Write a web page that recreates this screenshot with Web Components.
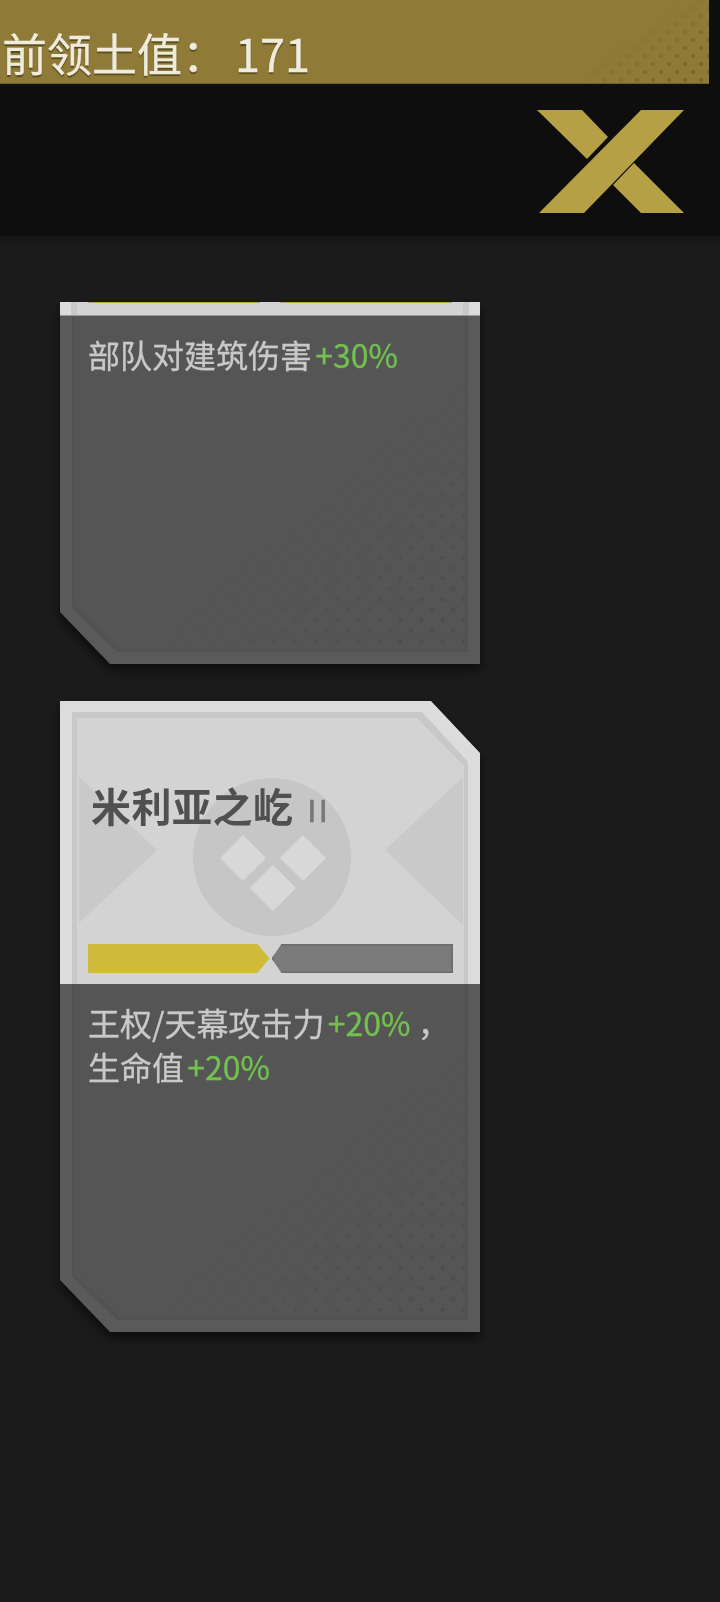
<!DOCTYPE html>
<html lang="zh">
<head>
<meta charset="utf-8">
<title>领土</title>
<style>
    html, body { margin: 0; background: #1c1c1c; }
    body { width: 720px; height: 1602px; overflow: hidden; font-family: "Noto Sans CJK SC", sans-serif; }
</style>
</head>
<body>
<territory-header value="171"></territory-header>
<perk-list>
    <perk-card collapsed>部队对建筑伤害<perk-gain>+30%</perk-gain></perk-card>
    <perk-card name="米利亚之屹" rank="II" filled="1">王权/天幕攻击力<perk-gain>+20%</perk-gain>，<br>生命值<perk-gain>+20%</perk-gain></perk-card>
</perk-list>

<script>
const dots = (size, alpha) => `
    background-image:
        radial-gradient(circle, rgba(0,0,0,${alpha}) 1.6px, transparent 2.6px),
        radial-gradient(circle, rgba(0,0,0,${alpha}) 1.6px, transparent 2.6px);
    background-size: ${size}px ${size}px;
    background-position: 0 0, ${size / 2}px ${size / 2}px;
`;

class CloseMark extends HTMLElement {
    constructor() {
        super();
        this.attachShadow({ mode: 'open' });
        this.shadowRoot.innerHTML = `
            <style>
                :host { display: block; width: 147px; height: 103px; }
                svg { display: block; }
            </style>
            <svg width="147" height="103" viewBox="0 0 147 103" fill="#b5a045">
                <polygon points="147,0 104,0 2,103 47,103"/>
                <polygon points="0,0 45,0 71,27 50,49"/>
                <polygon points="97,53 147,103 104,103 76,75"/>
            </svg>
        `;
    }
}

class TerritoryHeader extends HTMLElement {
    constructor() {
        super();
        this.attachShadow({ mode: 'open' });
    }

    connectedCallback() {
        const value = this.getAttribute('value') || '0';
        this.shadowRoot.innerHTML = `
            <style>
                :host {
                    display: block;
                    height: 236px;
                    background: #0e0e0e;
                    box-shadow: 0 4px 8px rgba(14,14,14,.6);
                }
                .bar {
                    position: relative;
                    width: 709px;
                    height: 84px;
                    box-sizing: border-box;
                    padding: 24px 0 0 2px;
                    background: #8f7b37;
                    border-bottom: 1px solid #6f5f28;
                    overflow: hidden;
                    color: #efebdd;
                    font: 400 45px/58px "Noto Sans CJK TC", "Noto Sans CJK SC", sans-serif;
                    -webkit-text-stroke: .3px #efebdd;
                    text-shadow: 0 2px 1px rgba(50,40,10,.6);
                    white-space: nowrap;
                    filter: blur(.5px);
                }
                .bar::after {
                    content: '';
                    position: absolute;
                    inset: 0 0 0 auto;
                    width: 120px;
                    ${dots(16, .16)}
                    -webkit-mask-image: linear-gradient(to bottom right, transparent 35%, #000 85%);
                    mask-image: linear-gradient(to bottom right, transparent 35%, #000 85%);
                }
                .num { margin-left: 8px; }
                .row { display: flex; justify-content: flex-end; padding: 26px 36px 0 0; }
                close-mark { filter: blur(.5px); }
            </style>
            <div class="bar">前领土值：<span class="num">${value}</span></div>
            <div class="row"><close-mark></close-mark></div>
        `;
    }
}

class PerkList extends HTMLElement {
    constructor() {
        super();
        this.attachShadow({ mode: 'open' });
        this.shadowRoot.innerHTML = `
            <style>
                :host { display: flex; flex-direction: column; gap: 37px; padding: 66px 0 0 60px; }
            </style>
            <slot></slot>
        `;
    }
}

class PerkGain extends HTMLElement {
    constructor() {
        super();
        this.attachShadow({ mode: 'open' });
        this.shadowRoot.innerHTML = `
            <style>
                :host { display: inline; margin-left: -4px; color: #72c14f; -webkit-text-stroke-color: #72c14f; }
            </style>
            <slot></slot>
        `;
    }
}

class LevelBar extends HTMLElement {
    constructor() {
        super();
        this.attachShadow({ mode: 'open' });
    }

    connectedCallback() {
        const total = Number(this.getAttribute('total') || 2);
        const filled = Number(this.getAttribute('filled') || 0);
        let segs = '';
        for (let i = 0; i < total; i++) {
            const cls = [i < filled ? 'on' : 'off', i === 0 ? 'first' : 'last'].join(' ');
            segs += `<div class="seg ${cls}"></div>`;
        }
        this.shadowRoot.innerHTML = `
            <style>
                :host { display: flex; gap: 2px; height: 29px; }
                .seg { flex: 1; }
                .on { background: #d0bb3b; }
                .off { background: #7b7b7b; box-shadow: inset 0 0 0 1.5px #6c6c6c; }
                .first { clip-path: polygon(0 0, calc(100% - 12px) 0, 100% 50%, calc(100% - 12px) 100%, 0 100%); }
                .last { clip-path: polygon(10px 0, 100% 0, 100% 100%, 10px 100%, 0 50%); }
            </style>
            ${segs}
        `;
    }
}

class PerkCard extends HTMLElement {
    constructor() {
        super();
        this.attachShadow({ mode: 'open' });
    }

    connectedCallback() {
        const name = this.getAttribute('name');
        const rank = this.getAttribute('rank') || '';
        const filled = this.getAttribute('filled') || '0';
        const head = this.hasAttribute('collapsed')
            ? `<div class="strip"><div class="sliver"></div><div class="sliver"></div></div>`
            : `<div class="head">
                    <div class="face"></div>
                    <svg class="art" width="420" height="283" viewBox="0 0 420 283">
                        <polygon points="19,76 97,149 19,222" fill="#c9c9c9"/>
                        <polygon points="403,76 325,149 403,224" fill="#c9c9c9"/>
                        <circle cx="212" cy="156" r="79" fill="#c6c6c6"/>
                        <g fill="#d8d8d8">
                            <polygon points="183,134 206,157 183,180 160,157"/>
                            <polygon points="243,134 266,157 243,180 220,157"/>
                            <polygon points="213,164 236,187 213,210 190,187"/>
                        </g>
                    </svg>
                    <div class="title">${name}<span class="rank">${rank}</span></div>
                    <level-bar total="2" filled="${filled}"></level-bar>
               </div>`;
        this.shadowRoot.innerHTML = `
            <style>
                :host {
                    display: block;
                    width: 420px;
                    filter: drop-shadow(0 6px 6px rgba(0,0,0,.6));
                }
                .wrap { filter: blur(.6px); }
                .strip {
                    height: 14px;
                    display: flex;
                    gap: 20px;
                    padding: 0 28px;
                    background: linear-gradient(to right, #dcdcdc 11px, #c9c9c9 11px, #c9c9c9 17px, #d3d3d3 17px, #d3d3d3 403px, #c9c9c9 403px, #c9c9c9 409px, #dcdcdc 409px);
                    box-shadow: inset 0 -1px 0 #9a9a9a;
                }
                .sliver { flex: 1; height: 1px; background: #b5a545; }
                .head {
                    position: relative;
                    height: 283px;
                    box-sizing: border-box;
                    display: flex;
                    flex-direction: column;
                    padding: 80px 27px 11px 28px;
                    background: #dcdcdc;
                    clip-path: polygon(0 0, 371px 0, 100% 52px, 100% 100%, 0 100%);
                    color: #505050;
                }
                .face {
                    position: absolute;
                    inset: 11px 12px 0 12px;
                    background: #c8c8c8;
                    clip-path: polygon(0 0, 350px 0, 100% 50px, 100% 100%, 0 100%);
                }
                .face::after {
                    content: '';
                    position: absolute;
                    inset: 6px 4px 0 5px;
                    background: #d3d3d3;
                    clip-path: polygon(0 0, 340px 0, 100% 48px, 100% 100%, 0 100%);
                }
                .art { position: absolute; left: 0; top: 0; }
                .title {
                    position: relative;
                    padding-left: 3px;
                    font: 700 40px/48px "Noto Sans CJK SC", sans-serif;
                    letter-spacing: .5px;
                    white-space: nowrap;
                }
                .rank {
                    font: 400 31px/48px "Liberation Sans", sans-serif;
                    -webkit-text-stroke: .6px #777;
                    color: #777;
                    letter-spacing: 3px;
                    margin-left: 14px;
                }
                level-bar { position: relative; margin-top: auto; }
                .body {
                    position: relative;
                    height: 348px;
                    box-sizing: border-box;
                    padding: 16px 20px 0 28px;
                    background: #5a5a5a;
                    clip-path: polygon(0 0, 100% 0, 100% 100%, 50px 100%, 0 296px);
                    color: #c9c9c9;
                    font: 400 32px/44px "Noto Sans CJK SC", sans-serif;
                    -webkit-text-stroke: .3px #c9c9c9;
                }
                .inner {
                    position: absolute;
                    inset: 0 12px 12px 12px;
                    background: #525252;
                    clip-path: polygon(0 0, 100% 0, 100% 100%, 45px 100%, 0 292px);
                }
                .inner::after {
                    content: '';
                    position: absolute;
                    inset: 0 3px 3px 3px;
                    background: #555;
                    clip-path: polygon(0 0, 100% 0, 100% 100%, 44px 100%, 0 290px);
                }
                .dots {
                    position: absolute;
                    inset: 0 15px 15px 15px;
                    ${dots(21, .09)}
                    -webkit-mask-image: linear-gradient(to bottom right, transparent 58%, #000 92%);
                    mask-image: linear-gradient(to bottom right, transparent 58%, #000 92%);
                }
                .text { position: relative; }
            </style>
            <div class="wrap">
                ${head}
                <div class="body">
                    <div class="inner"></div>
                    <div class="dots"></div>
                    <div class="text"><slot></slot></div>
                </div>
            </div>
        `;
    }
}

customElements.define('close-mark', CloseMark);
customElements.define('level-bar', LevelBar);
customElements.define('perk-gain', PerkGain);
customElements.define('perk-card', PerkCard);
customElements.define('perk-list', PerkList);
customElements.define('territory-header', TerritoryHeader);
</script>
</body>
</html>
